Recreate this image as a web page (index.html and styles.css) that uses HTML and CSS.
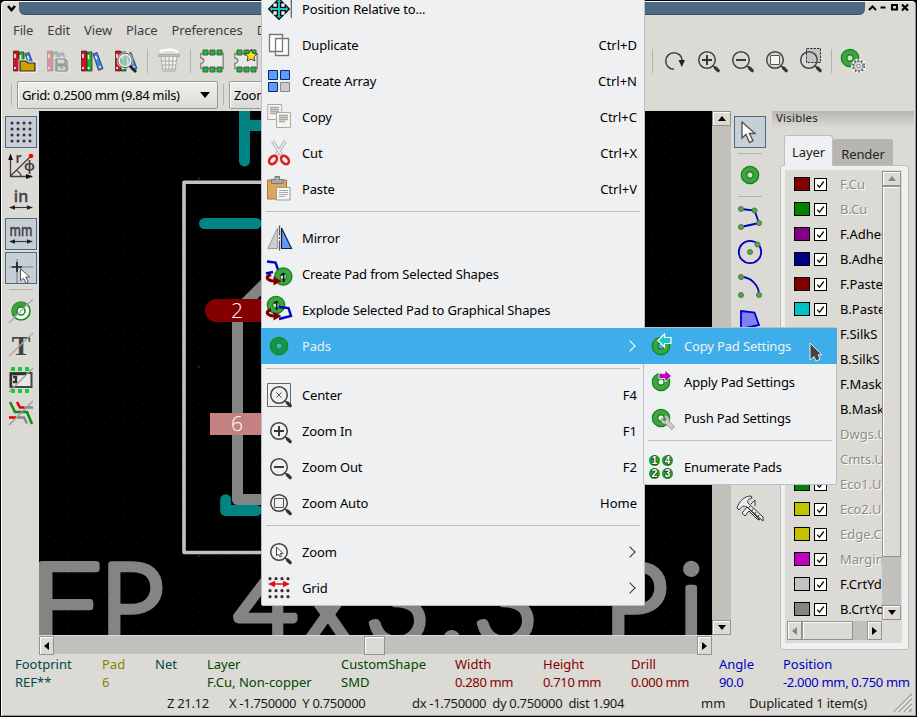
FILE: index.html
```html
<!DOCTYPE html>
<html lang="en">
<head>
<meta charset="utf-8">
<title>Footprint Editor</title>
<link rel="stylesheet" href="styles.css">
</head>
<body>
<svg class="defs" width="0" height="0">
  <symbol id="books" viewBox="0 0 24 24">
    <g stroke="#222" stroke-width=".7">
      <path d="M1.500 2h5v20h-5z" fill="#d8101c"/><path d="M7 3h5v19H7z" fill="#22b030"/>
      <path d="M13 5l4-1.500 6 16-4.500 2z" fill="#3b82e8"/>
    </g>
    <path d="M3 5v4M8.500 6v4M15.500 7l1.300 3.500" stroke="#fff" stroke-width="1.500"/>
    <path d="M3 18v2M8.500 18v2M19.500 17l.7 1.800" stroke="#fff" stroke-width="1.600"/>
  </symbol>
  <symbol id="glass" viewBox="0 0 24 24">
    <circle cx="11" cy="11" r="8.300" fill="none" stroke="#444" stroke-width="1.500"/>
    <path d="M17 17l2 1.500" stroke="#333" stroke-width="1.500"/><path d="M19.500 19l2.700 2.700" stroke="#333" stroke-width="3.200" stroke-linecap="round"/>
  </symbol>
  <symbol id="pad" viewBox="0 0 24 24">
    <circle cx="12" cy="12" r="6" fill="none" stroke="#43a047" stroke-width="5.500"/>
    <circle cx="12" cy="12" r="8.700" fill="none" stroke="#078a0b" stroke-width="1.200"/>
    <circle cx="12" cy="12" r="3.100" fill="none" stroke="#078a0b" stroke-width="1.200"/>
  </symbol>
  <symbol id="chip" viewBox="0 0 24 24">
    <path d="M.8 4.500h22.400v15H.8v-5c4-.5 4-5 0-5.500z" fill="#e8e8e6" stroke="#888" stroke-width="1.400"/>
    <path d="M3 1h5v5H3zM10 1h5v5h-5zM17 1h5v5h-5zM3 18h5v5H3zM10 18h5v5h-5zM17 18h5v5h-5z" fill="#10c030" stroke="#555" stroke-width="1"/>
  </symbol>
  <symbol id="tick" viewBox="0 0 13 13"><path d="M3.200 6.800l2.300 2.400L9.800 3.500" fill="none" stroke="#111" stroke-width="1.300"/></symbol>
  <symbol id="redarrow" viewBox="0 0 24 24" overflow="visible"><path d="M4 12.500C-1.500 14.500-1 18.500 7 19" fill="none" stroke="#800000" stroke-width="3.200"/><path d="M6.500 14.500l8 4.500-8 4.500z" fill="#800000"/></symbol>
  <symbol id="pointer" viewBox="0 0 24 24"><path d="M2 1v16l4-3.500 3.500 8 3.500-1.800-3.700-7.200H15z" fill="#fff" stroke="#555" stroke-width="1.400"/></symbol>
  <symbol id="griddots" viewBox="0 0 24 24"><g stroke="#333" stroke-width="3" stroke-linecap="round" stroke-dasharray="0 6"><path d="M3 3h19M3 9h19M3 15h19M3 21h19"/></g></symbol>
</svg>

<div class="window">
  <header class="titlebar">
    <svg width="19" height="14" viewBox="0 0 19 14"><path d="M7 4l3.500 4L14 4" fill="none" stroke="#000" stroke-width="2.600"/></svg>
    <div class="caption"></div>
    <svg width="51" height="14" viewBox="0 0 51 14"><g fill="none" stroke="#000" stroke-width="2"><path d="M4 8l3.500-3.500L11 8M15.500 5.500h5" /><path d="M27 3h5v4.500h-5z"/><path d="M37 2.500l6 6M43 2.500l-6 6" stroke-width="2.200"/></g></svg>
  </header>

  <nav class="menubar"><span>File</span><span>Edit</span><span>View</span><span>Place</span><span>Preferences</span><span>Dimensions</span></nav>

  <div class="toolbar">
    <i class="tool"><svg><use href="#books"/><path d="M8 12h6l2 2h7v8H8z" fill="#d6a400" stroke="#fff" stroke-width="3"/><path d="M8 12h6l2 2h7v8H8z" fill="#d0a000" stroke="#222" stroke-width="1.200"/></svg></i>
    <i class="tool"><svg><use href="#books" opacity=".35"/><path d="M8 9h12l3 3v11H8z" fill="#aaa" stroke="#eee" stroke-width="1"/><path d="M11 10h8v5h-8zM11 17h9v5h-9z" fill="#d8d8d4" stroke="#888"/><circle cx="15.500" cy="19" r="1.300" fill="#8b8"/></svg></i>
    <i class="tool"><svg><use href="#books"/></svg></i>
    <i class="tool"><svg><use href="#books"/><circle cx="11" cy="11.500" r="6.700" fill="#bdd" fill-opacity=".7" stroke="#eee" stroke-width="3"/><circle cx="11" cy="11.500" r="7.200" fill="none" stroke="#555" stroke-width="1"/><path d="M16 17l6 6" stroke="#222" stroke-width="2.800"/></svg></i>
    <i class="sep"></i>
    <i class="tool"><svg><path d="M3 3c2-3 5-1 7-2 3-1 7 0 11 2" fill="none" stroke="#fff" stroke-width="2.500"/><path d="M4 8l2 14h12l2-14" fill="#f2f2f0" stroke="#aaa"/><path d="M8 8l1 14M12 8v14M16 8l-1 14M5 12h14M5 16h14M6 20h12" stroke="#aaa"/><path d="M1.500 5.500h21v2h-21z" fill="#bbb" stroke="#999" stroke-width=".6"/></svg></i>
    <i class="sep"></i>
    <i class="tool"><svg><use href="#chip"/></svg></i>
    <i class="tool"><svg><use href="#chip"/><path d="M17 .5l1.800 3.800 4.200.5-3 2.900.8 4.300-3.800-2-3.800 2 .8-4.300-3-2.900 4.200-.5z" fill="#f7e020" stroke="#333" stroke-width=".9"/></svg></i>
    <span class="gap"></span>
    <i class="sep"></i>
    <i class="tool"><svg><path d="M12 20.300A8.300 8.300 0 1 1 20.300 12" fill="none" stroke="#444" stroke-width="1.600"/><path d="M16.500 11h6.500l-3.200 7z" fill="#222"/></svg></i>
    <i class="tool"><svg><use href="#glass"/><path d="M6 11h10M11 6v10" stroke="#333" stroke-width="1.900"/></svg></i>
    <i class="tool"><svg><use href="#glass"/><path d="M6 11h10" stroke="#333" stroke-width="1.900"/></svg></i>
    <i class="tool"><svg><use href="#glass"/><path d="M6.500 6.500h9v9h-9z" fill="#f4f4f2" stroke="#555" stroke-width="1"/></svg></i>
    <i class="tool"><svg><path d="M8.500-.5h14v14h-14z" fill="#c4c4c4" stroke="#333" stroke-dasharray="2.500 1"/><use href="#glass"/></svg></i>
    <i class="sep"></i>
    <i class="tool"><svg><use href="#pad" x="-3" y="-3"/><circle cx="17.500" cy="17" r="5.300" fill="#ccc" stroke="#fff" stroke-width="4"/><circle cx="17.500" cy="17" r="5.700" fill="none" stroke="#666" stroke-width="2" stroke-dasharray="1.900 1.680"/><circle cx="17.500" cy="17" r="4.600" fill="#ddd" stroke="#777"/><circle cx="17.500" cy="17" r="1.800" fill="#fff" stroke="#777"/></svg></i>
  </div>

  <div class="toolbar2">
    <i class="sep"></i>
    <div class="combo">Grid: 0.2500 mm (9.84 mils)<b class="down"></b></div>
    <i class="sep"></i>
    <div class="combo">Zoom Auto<b class="down"></b></div>
  </div>

  <main class="work">
    <aside class="side left">
      <i class="tool on"><svg><use href="#griddots" /></svg></i>
      <i class="tool"><svg><path d="M1.500 1v21.500H23M1.500 22L21 3M8 17c2 1 4 3 4 5" fill="none" stroke="#443c3c" stroke-width="1.300"/><path d="M-.8 6L1.500-.5 4 6zM17 20l7 2.500-7 2.500z" fill="#111"/><circle cx="22" cy="2" r="2.300" fill="#f00"/><text x="6.500" y="9" class="glyph">r</text><text x="15" y="17" class="glyph">φ</text></svg></i>
      <i class="tool"><svg><text x="12" y="13.500" text-anchor="middle" class="unit">in</text><path d="M3 19.500h18" stroke="#333" stroke-width="1.100"/><path d="M0 19.500l6-2.300v4.600zM24 19.500l-6-2.300v4.600z" fill="#222"/></svg></i>
      <i class="tool on"><svg><text x="12" y="13.500" text-anchor="middle" class="unit" textLength="23" lengthAdjust="spacingAndGlyphs">mm</text><path d="M3 19.500h18" stroke="#333" stroke-width="1.100"/><path d="M0 19.500l6-2.300v4.600zM24 19.500l-6-2.300v4.600z" fill="#222"/></svg></i>
      <i class="tool on"><svg><path d="M0 11h24M8 3v24" stroke="#999" stroke-width="1.700"/><path d="M3 11h10M8 6v10" stroke="#222" stroke-width="1.700"/><path d="M11.500 13.500v12l3-2.500 2.500 5 2.300-1.200-2.500-5h4z" transform="translate(0 -.8)" fill="#fff" stroke="#555"/></svg></i>
      <i class="sep"></i>
      <i class="tool"><svg><circle cx="12" cy="12" r="9" fill="#fff" stroke="#189018" stroke-width="1.600"/><path d="M5.600 18.400A9 9 0 0 1 18.400 5.600z" fill="#40a040"/><circle cx="12" cy="12" r="4" fill="#fff" stroke="#189018" stroke-width="1.600"/><path d="M0 24L24 0" stroke="#aaa" stroke-width="1.300"/></svg></i>
      <i class="tool"><svg><text x="12" y="21.500" text-anchor="middle" class="serif">T</text><path d="M0 23L24 0" stroke="#aaa" stroke-width="1.300"/></svg></i>
      <i class="tool"><svg><path d="M2 0h4v4H2zM9 0h4v4H9zM16 0h4v4h-4zM2 22h4v4H2zM9 22h4v4H9zM16 22h4v4h-4z" fill="#10d030"/><path d="M1.500 6h21v14h-21z" fill="#e8e8e6" stroke="#444" stroke-width="2"/><path d="M1 7h16M2 7v12M4 10h3v5H4" fill="none" stroke="#333" stroke-width="2.400"/><path d="M0 25L24 1" stroke="#999" stroke-width="1.300"/></svg></i>
      <i class="tool"><svg fill="none" stroke-width="2.500"><path d="M1 1l5 10h12l5 12" stroke="#108a18"/><path d="M8 1l3 5.500h5" stroke="#e00000"/><path d="M15 6.500h9M8 16.500h7l3 6" stroke="#888"/><path d="M0 16.500h7" stroke="#e00000"/><path d="M0 24L24 0" stroke="#999" stroke-width="1.300"/></svg></i>
    </aside>

    <section class="view">
      <svg class="board" viewBox="39 111 673 524">
        <defs><pattern id="dots" x="48.200" y="121" width="18.860" height="18.860" patternUnits="userSpaceOnUse"><rect width="1" height="1" fill="#242424"/></pattern></defs>
        <rect x="39" y="111" width="673" height="524" fill="#000"/>
        <rect x="39" y="111" width="673" height="524" fill="url(#dots)"/>
        <path d="M198 177.500h2v2h-2zM198 366h2v2h-2zM198 555h2v2h-2z" fill="#222"/>
        <path d="M184 182.200h440v370.300H184z" fill="none" stroke="#c2c2c2" stroke-width="3.600" stroke-linejoin="round"/>
        <g fill="none" stroke="#008484" stroke-width="11" stroke-linecap="round" stroke-linejoin="round">
          <path d="M244.500 100v61M244.500 125.500h30M204.500 223.500h51.500M225.700 499.700v10.800h30.500"/>
        </g>
        <path d="M275 273.500l-37.500 37.500v188.500h40" fill="none" stroke="#848484" stroke-width="11" stroke-linejoin="round"/>
        <rect x="205" y="299" width="90" height="23" rx="11.500" fill="#840000"/>
        <rect x="210" y="413" width="90" height="22" fill="#c48181"/>
        <g class="padnum"><text x="237" y="317.500">2</text><text x="237" y="430.500">6</text></g>
        <g class="silk">
          <text transform="translate(29 643) scale(1.150 1)">F</text>
          <text transform="translate(100 643)">P</text>
          <text transform="translate(234 643)">4</text>
          <text transform="translate(302 643)">x</text>
          <text transform="translate(366 643)">3</text>
          <text transform="translate(439 643)">.</text>
          <text transform="translate(474 643)">3</text>
          <text transform="translate(604 643)">P</text>
          <text transform="translate(679 643)">i</text>
        </g>
      </svg>
      <div class="vbar"><b class="btn"><i class="up"></i></b><b class="btn"><i class="down"></i></b></div>
      <div class="hbar"><b class="btn"><i class="lt"></i></b><b class="thumb"></b><b class="btn"><i class="rt"></i></b></div>
    </section>

    <aside class="side right">
      <i class="tool on"><svg><use href="#pointer" x="2" y="1"/></svg></i>
      <i class="sep"></i>
      <i class="tool"><svg><use href="#pad"/></svg></i>
      <i class="sep"></i>
      <i class="tool"><svg><path d="M3 3l13.500 1.500L21 17 3 21" fill="none" stroke="#0000c0" stroke-width="1.800"/><g class="nodes"><circle cx="3" cy="3" r="2.500"/><circle cx="16.500" cy="4.500" r="2.500"/><circle cx="21" cy="17" r="2.500"/><circle cx="3" cy="21" r="2.500"/></g></svg></i>
      <i class="tool"><svg><circle cx="12" cy="12" r="11.200" fill="none" stroke="#0000c0" stroke-width="1.800"/><g class="nodes"><circle cx="12" cy="12" r="2.500"/><circle cx="19.500" cy="4.500" r="2.500"/></g></svg></i>
      <i class="tool"><svg><path d="M3 3a18 18 0 0 1 18 18" fill="none" stroke="#0000c0" stroke-width="1.800"/><g class="nodes"><circle cx="3" cy="3" r="2.500"/><circle cx="21" cy="21" r="2.500"/><circle cx="3" cy="21" r="2.500"/></g></svg></i>
      <i class="tool"><svg><path d="M3 3l13.500 1.500L21 17 3 21z" fill="#8080f8" stroke="#0000c0" stroke-width="1.800"/></svg></i>
      <i class="tool measure"><svg><g fill="#eee" stroke="#333" stroke-width="1"><path d="M-1 12C1 5 7 0 13 0l1 2c-4 1-5 3-4 5l15 14v4L9 11c-4-2-6 0-8 3z"/><path d="M4 17l5-6 13 13-3-1-8-8-4 5zM13 8l4-4v6"/></g><path d="M12 10l-2 3M15 13l-2 3M18 16l-2 3M21 19l-2 3" stroke="#333"/></svg></i>
    </aside>

    <aside class="visibles">
      <h2>Visibles</h2>
      <div class="tabs"><span class="tab active">Layer</span><span class="tab">Render</span></div>
      <div class="page">
        <div class="scroller">
          <ul class="layers">
            <li class="dim"><b class="red"></b><svg><use href="#tick"/></svg>F.Cu</li>
            <li class="dim"><b class="green"></b><svg><use href="#tick"/></svg>B.Cu</li>
            <li><b class="purple"></b><svg><use href="#tick"/></svg>F.Adhes</li>
            <li><b class="navy"></b><svg><use href="#tick"/></svg>B.Adhes</li>
            <li><b class="red"></b><svg><use href="#tick"/></svg>F.Paste</li>
            <li><b class="cyan"></b><svg><use href="#tick"/></svg>B.Paste</li>
            <li><b class="teal"></b><svg><use href="#tick"/></svg>F.SilkS</li>
            <li><b class="purple"></b><svg><use href="#tick"/></svg>B.SilkS</li>
            <li><b class="purple"></b><svg><use href="#tick"/></svg>F.Mask</li>
            <li><b class="yellow"></b><svg><use href="#tick"/></svg>B.Mask</li>
            <li class="dim"><b class="silver"></b><svg><use href="#tick"/></svg>Dwgs.User</li>
            <li class="dim"><b class="navy"></b><svg><use href="#tick"/></svg>Cmts.User</li>
            <li class="dim"><b class="green"></b><svg><use href="#tick"/></svg>Eco1.User</li>
            <li class="dim"><b class="yellow"></b><svg><use href="#tick"/></svg>Eco2.User</li>
            <li class="dim"><b class="yellow"></b><svg><use href="#tick"/></svg>Edge.Cuts</li>
            <li class="dim"><b class="magenta"></b><svg><use href="#tick"/></svg>Margin</li>
            <li><b class="silver"></b><svg><use href="#tick"/></svg>F.CrtYd</li>
            <li><b class="gray"></b><svg><use href="#tick"/></svg>B.CrtYd</li>
          </ul>
          <div class="vbar"><b class="btn"><i class="up dimmed"></i></b><b class="thumb"></b><b class="btn"><i class="down"></i></b></div>
          <div class="hbar"><b class="btn"><i class="lt dimmed"></i></b><b class="thumb"></b><b class="btn"><i class="rt"></i></b></div>
        </div>
      </div>
    </aside>
  </main>

  <dl class="info">
    <div class="c-teal w87"><dt>Footprint</dt><dd>REF**</dd></div>
    <div class="c-olive w53"><dt>Pad</dt><dd>6</dd></div>
    <div class="c-teal w52"><dt>Net</dt><dd></dd></div>
    <div class="c-green w134"><dt>Layer</dt><dd>F.Cu, Non-copper</dd></div>
    <div class="c-green w114"><dt>CustomShape</dt><dd>SMD</dd></div>
    <div class="c-red w88"><dt>Width</dt><dd>0.280 mm</dd></div>
    <div class="c-red w88"><dt>Height</dt><dd>0.710 mm</dd></div>
    <div class="c-red w88"><dt>Drill</dt><dd>0.000 mm</dd></div>
    <div class="c-blue w64"><dt>Angle</dt><dd>90.0</dd></div>
    <div class="c-blue w130"><dt>Position</dt><dd>-2.000 mm, 0.750 mm</dd></div>
  </dl>
  <footer class="status">
    <span class="s-zoom">Z 21.12</span><span class="s-xy">X -1.750000&nbsp; Y 0.750000</span><span class="s-delta">dx -1.750000&nbsp; dy 0.750000&nbsp; dist 1.904</span><span class="s-unit">mm</span><span class="s-msg">Duplicated 1 item(s)</span>
    <svg class="grip" viewBox="0 0 20 18"><path d="M1 18L19 0M6 18L19 5M11 18l8-8M16 18l3-3" stroke="#999892" stroke-width="1.500"/><path d="M2.300 18L19 1.300M7.300 18L19 6.300M12.300 18L19 11.300" stroke="#fff" stroke-width=".8"/></svg>
  </footer>
</div>

<div class="menu context">
  <div class="item"><svg><path d="M12 .5l4.500 4.500h-2.700v5.200H19V7.500L23.500 12 19 16.500v-2.700h-5.200V19h2.700L12 23.500 7.500 19h2.700v-5.200H5v2.700L.5 12 5 7.500v2.700h5.200V5H7.500z" transform="translate(1.200 1.200) scale(.9)" fill="#18c8c8" stroke="#111" stroke-width="1.500"/><path d="M24.300 2v19" stroke="#666" stroke-width="1.300"/></svg>Position Relative to...</div>
  <div class="item"><svg><g fill="#fff" stroke="#777" stroke-width="1.300"><path d="M2.500 1.500h13v17h-13zM8.500 5.500h13v17h-13z"/></g></svg>Duplicate<kbd>Ctrl+D</kbd></div>
  <div class="item"><svg><g fill="#5c9cff" stroke="#0a2a66"><path d="M1.500 1.500h9v9h-9zM13.500 1.500h9v9h-9zM1.500 13.500h9v9h-9z"/><path d="M13.500 13.500h9v9h-9z" fill="#ccc" stroke="#888"/></g></svg>Create Array<kbd>Ctrl+N</kbd></div>
  <div class="item"><svg><g fill="#f4f4f2" stroke="#aaa"><path d="M.7-.5h14v15H.7z"/><path d="M9.500 7.500h14v15h-14z"/></g><path d="M3 2.500h9M3 4.500h9M3 6.500h9M3 8.500h6M12 10.500h9M12 12.500h9M12 14.500h9M12 16.500h6" stroke="#aaa89f" stroke-width="1.500"/></svg>Copy<kbd>Ctrl+C</kbd></div>
  <div class="item"><svg><path d="M5.500 0L15 14.500M18.500 0L9 14.500" stroke="#aaa" stroke-width="3.200"/><path d="M5.500 0L15 14.500M18.500 0L9 14.500" stroke="#e8e8e6" stroke-width="1.700"/><g fill="none" stroke="#dc2020" stroke-width="2.600"><ellipse cx="6" cy="19" rx="3.300" ry="4.600" transform="rotate(40 6 19)"/><ellipse cx="18" cy="19" rx="3.300" ry="4.600" transform="rotate(-40 18 19)"/></g></svg>Cut<kbd>Ctrl+X</kbd></div>
  <div class="item"><svg><path d="M.5 3h19v19H.5z" fill="#dba75a" stroke="#a8763a"/><path d="M4.500 2.500H8V-.5h4.500v3H16v4H4.500z" fill="#aaa" stroke="#777"/><path d="M9.500 10.500h13.500v12.500H9.500z" fill="#f6f6f4" stroke="#999"/><path d="M12 13.500h9M12 15.500h9M12 17.500h9M12 19.500h6" stroke="#aaa"/></svg>Paste<kbd>Ctrl+V</kbd></div>
  <hr>
  <div class="item"><svg><path d="M.8 22.500L10.500 2v20.500z" fill="#ccc" stroke="#999"/><path d="M24.500 22.500L14.500 2v20.500z" fill="#5c9cff" stroke="#123" stroke-width="1.200"/><path d="M12.500-.5v26" stroke="#555" stroke-width="1.200" stroke-dasharray="10 1.500 2 1.500"/></svg>Mirror</div>
  <div class="item"><svg><path d="M0-.5l8.500 1L11 7.500v3M6 10l-7 1.500" fill="none" stroke="#0000c8" stroke-width="2.400"/><use href="#pad" x="4.300" y="2.500"/><use href="#redarrow"/><text x="16" y="19.500" text-anchor="middle" class="num">1</text></svg>Create Pad from Selected Shapes</div>
  <div class="item"><svg><use href="#pad" x="-3" y="-5"/><path d="M12 9l9.500 1L24 18l-12 3" fill="none" stroke="#0000c8" stroke-width="2.400"/><use href="#redarrow" y="-1"/><text x="9" y="12" text-anchor="middle" class="num">1</text></svg>Explode Selected Pad to Graphical Shapes</div>
  <div class="item hot"><svg><use href="#pad"/><circle cx="12" cy="12" r="6" fill="none" stroke="#14934a" stroke-width="5"/></svg>Pads<i class="more"></i></div>
  <hr>
  <div class="item"><svg><path d="M.5.500h23v23H.5z" fill="none" stroke="#666"/><use href="#glass" x="1" y="1"/><path d="M9.500 9.500l5 5M14.500 9.500l-5 5" stroke="#555"/></svg>Center<kbd>F4</kbd></div>
  <div class="item"><svg><use href="#glass" x="1" y="1"/><path d="M7 12h10M12 7v10" stroke="#333" stroke-width="1.900"/></svg>Zoom In<kbd>F1</kbd></div>
  <div class="item"><svg><use href="#glass" x="1" y="1"/><path d="M7 12h10" stroke="#333" stroke-width="1.900"/></svg>Zoom Out<kbd>F2</kbd></div>
  <div class="item"><svg><use href="#glass" x="1" y="1"/><path d="M7.500 7.500h9v9h-9z" fill="none" stroke="#555"/></svg>Zoom Auto<kbd>Home</kbd></div>
  <hr>
  <div class="item"><svg><use href="#glass" x="1" y="1"/><path d="M9.500 7v9l2-2 1.500 3 1.500-.8L13.300 13.500H16z" fill="#fff" stroke="#444"/></svg>Zoom<i class="more"></i></div>
  <div class="item"><svg><g stroke="#333" stroke-width="3.200" stroke-linecap="round" stroke-dasharray="0 6"><path d="M3 1.200h19M3 13.200h19M3 19.200h19" transform="translate(0 1.500)"/></g><path d="M4 8h16" stroke="#e01010" stroke-width="1.500"/><path d="M1 8l7-3.200v6.400zM23 8l-7-3.200v6.400z" fill="#e01010"/></svg>Grid<i class="more"></i></div>
</div>

<div class="menu sub">
  <div class="item hot"><svg><use href="#pad" /><path d="M9 6.500L15.500 0v3.500H22v6h-6.500V13z" fill="#18c8c8" stroke="#fff" stroke-width="1.200"/></svg>Copy Pad Settings</div>
  <div class="item"><svg><use href="#pad" /><path d="M10 3.500h6V0l6.500 6-6.500 6V8.500h-6z" fill="#c000c0" stroke="#fff" stroke-width=".8"/></svg>Apply Pad Settings</div>
  <div class="item"><svg><use href="#pad" /><path d="M13 12c-2 3 0 6 4 6l6 5.500 2.500-2.500L20 15c1-4-2-6-5-5l2.500 3-2 2.500z" fill="#ccc" stroke="#888" stroke-width=".8"/></svg>Push Pad Settings</div>
  <hr>
  <div class="item"><svg><g fill="#1ba01b"><circle cx="5.500" cy="5.500" r="5.500"/><circle cx="18.500" cy="5.500" r="5.500"/><circle cx="5.500" cy="18.500" r="5.500"/><circle cx="18.500" cy="18.500" r="5.500"/></g><g class="tiny"><text x="5.500" y="9">1</text><text x="18.500" y="9">4</text><text x="5.500" y="22">2</text><text x="18.500" y="22">3</text></g></svg>Enumerate Pads</div>
</div>
<svg class="cursor" viewBox="0 0 14 22"><path d="M1 1v17l4-3.500 2 4.500 4-1.700-1.800-4.500H13z" fill="#444" stroke="#e8e8e8" stroke-width="1"/></svg>
</body>
</html>
```
FILE: styles.css
```css
* { box-sizing: border-box; }
body {
  margin: 0;
  width: 917px;
  height: 717px;
  overflow: hidden;
  position: relative;
  background: #000;
  font: 13px/18px "Noto Sans", "Open Sans", sans-serif;
  color: #1a1a1a;
}
i { font-style: normal; }
.defs { position: absolute; }
svg { display: block; overflow: visible; }

.window {
  width: 917px;
  height: 717px;
  display: flex;
  flex-direction: column;
  background: #dcdad5;
  border: 1px solid #000;
  border-radius: 5px 5px 0 0;
  box-shadow: inset 1px 1px #fff, inset -1px -1px #99978f;
}
.titlebar { display: flex; height: 14px; flex: none; padding-top: 1px; }
.caption { width: 847px; height: 13px; margin-left: -1px; background: #4b6983; border-bottom: 1px solid #3a536b; border-radius: 0 0 6px 6px; }

.menubar { display: flex; height: 29px; padding-left: 12px; gap: 14px; align-items: center; color: #3c4044; letter-spacing: -.12px; }
.toolbar { display: flex; height: 34px; padding-left: 6px; align-items: center; }
.tool { width: 34px; height: 34px; flex: none; display: flex; align-items: center; justify-content: center; }
.tool svg { width: 24px; height: 24px; }
.toolbar .sep, .toolbar2 .sep { width: 9px; flex: none; display: flex; justify-content: center; }
.sep::before { content: ""; display: block; background: #b3b1ab; }
.toolbar .sep::before { width: 1px; height: 24px; }
.toolbar2 .sep::before { width: 1px; height: 21px; }
.gap { width: 385px; flex: none; }
.toolbar2 { display: flex; height: 33px; padding-left: 6px; align-items: center; }
.combo {
  width: 201px; height: 28px; margin: 0 1px; padding: 0 7px 0 4px; flex: none;
  display: flex; align-items: center; justify-content: space-between; color: #000; letter-spacing: -.34px;
  border: 1px solid #999791; border-radius: 2px; background: linear-gradient(#f0f0ee, #dcdad5);
  box-shadow: inset 1px 1px #fff;
}
.up, .down { width: 0; border: 5px solid transparent; }
.combo .down { border-width: 6px 5.500px 0; border-top-color: #000; }

.work { display: flex; height: 544px; flex: none; }
.side { display: flex; flex-direction: column; align-items: center; padding-top: 4px; flex: none; }
.left { width: 38px; padding-left: 2px; }
.right { width: 35px; }
.side .sep { height: 9px; display: flex; align-items: center; }
.side .sep::before { width: 24px; height: 1px; }
.on { width: 32px; height: 32px; margin: 1px; background: #c6ced6; border: 1px solid #4b6983; }
.measure { margin-top: 154px; }
.nodes { fill: #38b838; stroke: #666; stroke-width: 1; }
.unit { font: 500 16px "Noto Sans", sans-serif; fill: #444; stroke: #444; stroke-width: .4; }
.glyph { font: 600 14px "Noto Sans", sans-serif; fill: #443c3c; }
.serif { font: bold 28px "Liberation Serif", serif; fill: #444; }
.num { font: 600 12px "Noto Sans", sans-serif; fill: #000; }
.tiny text { font: bold 10px "Liberation Sans", sans-serif; fill: #fff; stroke: #333; stroke-width: 1.4px; paint-order: stroke; text-anchor: middle; }

.view { display: grid; grid-template: 524px 20px / 673px 20px; flex: none; }
.board { width: 673px; height: 524px; overflow: hidden; }
.padnum text { font: 300 21px "Open Sans", "Lato", sans-serif; fill: #fff; text-anchor: middle; }
.silk text { font: 300 110px Lato, sans-serif; fill: #848484; stroke: #848484; stroke-width: 6.5px; stroke-linejoin: round; }

.vbar, .hbar { display: flex; justify-content: space-between; background: #c2c0ba; }
.vbar { flex-direction: column; width: 19px; }
.hbar { height: 19px; border-top: 1px solid #dcdad5; }
.btn, .thumb { background: #dcdad5; border: 1px solid #94928b; box-shadow: inset 1px 1px #fff; flex: none; display: flex; align-items: center; justify-content: center; }
.vbar .btn { width: 19px; height: 15px; }
.hbar .btn { width: 15px; height: 19px; }
.view .hbar .thumb { width: 21px; height: 19px; margin-left: -3px; }
.up { border-width: 0 4.500px 5px; border-bottom-color: #000; }
.btn .down { border-width: 5px 4.500px 0; border-top-color: #000; }
.lt { border: solid transparent; border-width: 4.500px 5px 4.500px 0; border-right-color: #000; }
.rt { border: solid transparent; border-width: 4.500px 0 4.500px 5px; border-left-color: #000; }
.up.dimmed { border-bottom-color: #858580; }
.lt.dimmed { border-right-color: #858580; }

.visibles { width: 142px; margin-left: 5px; flex: none; display: flex; flex-direction: column; }
.visibles h2 { margin: 0; height: 17px; padding-left: 4px; font: 11.500px/13px "Noto Sans", sans-serif; letter-spacing: .2px; color: #222; background: linear-gradient(#b8b6b1, #dcdad5); }
.tabs { display: flex; align-items: flex-end; margin: 7px 0 -1px 12px; height: 31px; }
.tab { height: 27px; width: 60px; padding-top: 6px; text-align: center; background: #b7b5b0; border-radius: 3px 3px 0 0; color: #222; letter-spacing: -.1px; }
.tab.active { width: 49px; height: 31px; padding-top: 7px; background: #eff0f1; border: 1px solid #bcbebf; border-bottom: 0; z-index: 1; }
.page { width: 129px; height: 485px; margin-left: 8px; padding: 4px 5px 6px 4px; background: #eff0f1; border: 1px solid #bcbfc2; border-radius: 3px; }
.scroller { width: 117px; height: 473px; display: grid; grid-template: 451px 19px / 97px 19px; background: #dcdad5; }
.scroller .vbar { height: 449px; margin-top: 1px; justify-content: flex-start; }
.scroller .vbar .thumb { height: 371px; margin-bottom: 48px; }
.scroller .hbar { width: 95px; margin-left: 2px; border: 0; justify-content: flex-start; }
.scroller .hbar .thumb { width: 51px; margin-right: 14px; }
.layers { list-style: none; margin: 0; padding: 1px 0 0 9px; overflow: hidden; }
.layers li { display: flex; align-items: center; height: 25px; white-space: nowrap; color: #000; }
.layers b { width: 16px; height: 14px; border: 1px solid #000; flex: none; }
.layers svg { width: 13px; height: 13px; flex: none; margin: 1px 13px 0 4px; background: #fff; outline: 1px solid #000; outline-offset: -1px; }
.layers .dim { color: #8e8c88; text-shadow: 1px 1px #fff; }
.red { background: #840000; } .green { background: #008400; } .purple { background: #840084; }
.navy { background: #000084; } .cyan { background: #00c2c2; } .teal { background: #008484; }
.yellow { background: #c2c200; } .magenta { background: #c200c2; } .silver { background: #c2c2c2; } .gray { background: #848484; }

.info { display: flex; margin: 0; padding-left: 14px; height: 38px; flex: none; white-space: nowrap; }
.info dd { margin: 0; }
.w87 { width: 87px; } .w53 { width: 53px; } .w52 { width: 52px; } .w134 { width: 134px; } .w114 { width: 114px; }
.w88 { width: 88px; } .w64 { width: 64px; } .w130 { width: 130px; }
.c-teal { color: #004848; } .c-olive { color: #848400; } .c-green { color: #004800; } .c-red { color: #840000; } .c-blue { color: #0000c2; }
.c-red dd { letter-spacing: -.35px; } .c-blue dd { letter-spacing: -.33px; }
.status { display: flex; padding-left: 166px; height: 20px; align-items: center; white-space: nowrap; letter-spacing: -.32px; }
.s-zoom { width: 62px; } .s-xy { width: 183px; } .s-delta { width: 289px; } .s-unit { width: 48px; letter-spacing: 0; } .s-msg { letter-spacing: -.18px; }
.grip { width: 20px; height: 18px; margin-left: auto; margin-right: 3px; }

.menu { position: absolute; background: #eff0f1; border: 1px solid #bcbebf; border-radius: 2px; color: #000; letter-spacing: -.16px; }
.context { left: 261px; top: -10px; width: 384px; height: 616px; }
.sub { left: 643px; top: 327px; width: 194px; height: 158px; }
.item { display: flex; align-items: center; height: 36px; padding: 0 7px 0 5px; white-space: nowrap; }
.item > svg { width: 24px; height: 24px; margin-right: 11px; flex: none; }
.hot { background: #3daee9; color: #eff0f1; margin: 0 -1px; padding: 0 8px 0 6px; }
.menu hr { height: 1px; margin: 4px 4px 8px; border: 0; background: #bcbebf; }
kbd { margin-left: auto; font: inherit; letter-spacing: 0; }
.more { margin-left: auto; margin-right: 2px; width: 8px; height: 8px; border: solid #333; border-width: 1px 1px 0 0; transform: translateX(-1px) rotate(45deg) ; }
.hot .more { border-color: #fff; }
.cursor { position: absolute; left: 809px; top: 342px; width: 14px; height: 22px; }
```
